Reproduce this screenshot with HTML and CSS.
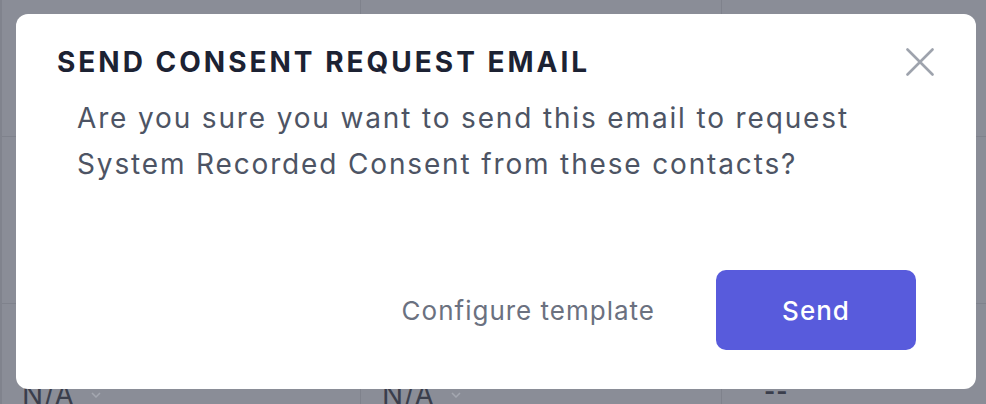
FILE: index.html
```html
<!DOCTYPE html>
<html lang="en">
<head>
<meta charset="utf-8">
<title>Send consent request email</title>
<link rel="stylesheet" href="styles.css">
</head>
<body>
<div class="page">
  <div class="table">
    <div class="cell"></div>
    <div class="cell"></div>
    <div class="cell"></div>
    <div class="cell"></div>
    <div class="cell"></div>
    <div class="cell"></div>
    <div class="cell last"><span class="val">N/A</span><svg class="chev" viewBox="0 0 10 6" width="10" height="6"><path d="M1 1l4 4 4-4" fill="none" stroke="currentColor" stroke-width="1.5"/></svg></div>
    <div class="cell last second"><span class="val">N/A</span><svg class="chev" viewBox="0 0 10 6" width="10" height="6"><path d="M1 1l4 4 4-4" fill="none" stroke="currentColor" stroke-width="1.5"/></svg></div>
    <div class="cell last dash"><span class="val">--</span></div>
  </div>
  <div class="modal" role="dialog">
    <h2 class="title">SEND CONSENT REQUEST EMAIL</h2>
    <button class="close" aria-label="Close">
      <svg viewBox="0 0 28 28" width="28" height="28"><path d="M1.5 1.5l25 25M26.5 1.5l-25 25" stroke="currentColor" stroke-width="2.6" stroke-linecap="round" fill="none"/></svg>
    </button>
    <p class="body">Are you sure you want to send this email to request<br>System Recorded Consent from these contacts?</p>
    <div class="footer">
      <button class="link">Configure template</button>
      <button class="primary">Send</button>
    </div>
  </div>
</div>
</body>
</html>
```

FILE: styles.css
```css
* { box-sizing: border-box; }
html, body { margin: 0; padding: 0; }
body {
  width: 986px;
  height: 404px;
  overflow: hidden;
  background: #8a8d97;
  font-family: Inter, "Noto Sans", sans-serif;
}
.page {
  position: relative;
  width: 986px;
  height: 404px;
}
.table {
  display: grid;
  grid-template-columns: 359px 361px 1fr;
  grid-template-rows: 137px 167px 100px;
  border-left: 2px solid #80838d;
}
.cell {
  border-right: 1px solid #7f828c;
  border-bottom: 1px solid #7f828c;
  padding-left: 20px;
}
.cell:nth-child(3n) { border-right: none; }
.cell.last {
  border-bottom: none;
  display: flex;
  align-items: flex-start;
  gap: 16px;
  padding-top: 74px;
  color: #3a3e4c;
  font-size: 28px;
  line-height: 34px;
  letter-spacing: 1px;
}
.cell.second { padding-left: 21px; }
.cell.dash { padding-left: 42px; padding-top: 71px; font-size: 24px; font-weight: 700; letter-spacing: 1px; }
.chev { color: #a4a7b0; margin-top: 14px; }
.modal {
  position: absolute;
  top: 14px;
  left: 16px;
  width: 960px;
  height: 375px;
  background: #ffffff;
  border-radius: 12px;
  padding: 31px 60px 39px 41px;
  display: flex;
  flex-direction: column;
}
.title {
  margin: 0;
  font-size: 28px;
  line-height: 34px;
  font-weight: 700;
  letter-spacing: 3px;
  color: #1c2233;
}
.close {
  position: absolute;
  top: 34px;
  right: 42px;
  width: 28px;
  height: 28px;
  padding: 0;
  border: none;
  background: none;
  color: #9ea3ad;
  display: flex;
}
.body {
  margin: 16px 0 0 20px;
  font-size: 28px;
  line-height: 46px;
  letter-spacing: 1.85px;
  color: #4d5464;
}
.footer {
  margin-top: auto;
  display: flex;
  justify-content: flex-end;
  align-items: center;
  gap: 61px;
}
.link {
  border: none;
  background: none;
  padding: 0;
  font-family: inherit;
  font-size: 26px;
  letter-spacing: 1px;
  color: #6b7180;
}
.primary {
  width: 200px;
  height: 80px;
  border: none;
  border-radius: 10px;
  background: #585bdc;
  color: #ffffff;
  font-family: inherit;
  font-size: 26px;
  font-weight: 500;
  letter-spacing: 1px;
}
```
